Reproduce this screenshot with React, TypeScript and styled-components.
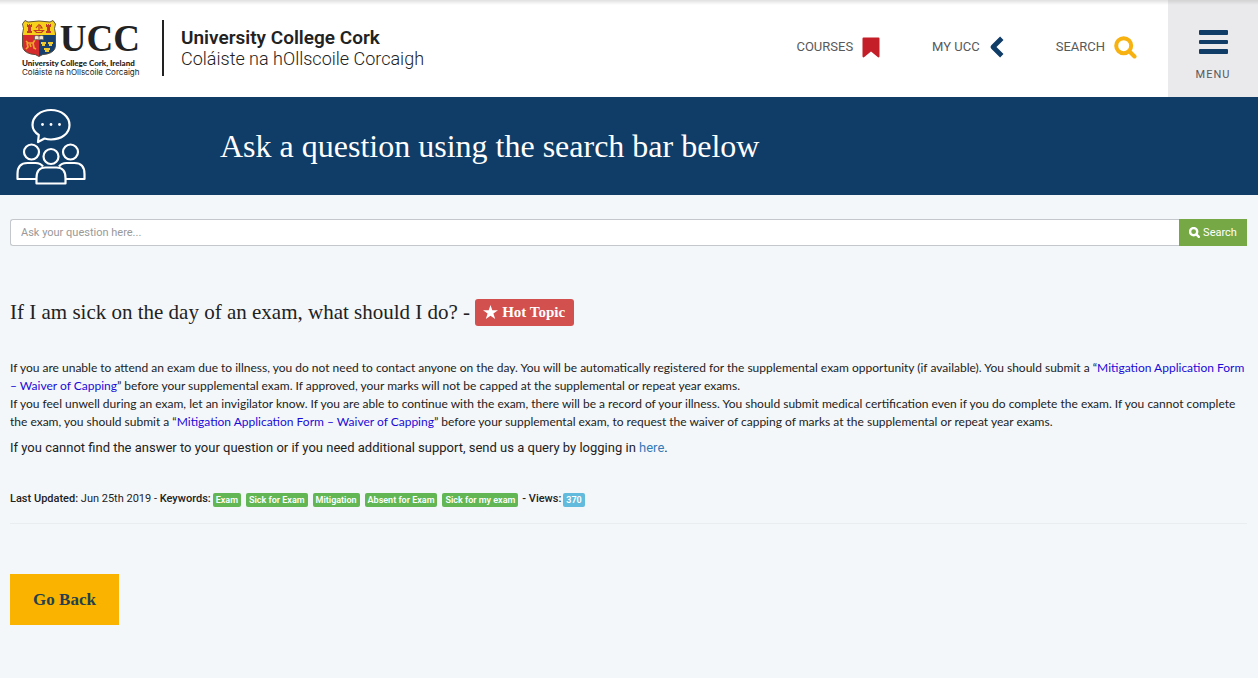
import React from 'react';
import styled, { createGlobalStyle } from 'styled-components';

const navy = '#103c68';
const sans = 'Roboto, "Liberation Sans", sans-serif';
const serif = '"Liberation Serif", serif';

const GlobalStyle = createGlobalStyle`
  * { box-sizing: border-box; }
  body {
    margin: 0;
    background: #f4f7fa;
    color: #222;
    font-family: ${sans};
    font-size: 13px;
  }
`;

const Header = styled.header`
  display: flex;
  align-items: stretch;
  height: 97px;
  background: linear-gradient(rgba(0, 0, 0, 0.12), rgba(0, 0, 0, 0) 5px), #fff;
`;

const Brand = styled.a`
  display: flex;
  align-items: flex-start;
  padding: 20px 0 0 22px;
  color: #222;
  text-decoration: none;
`;

const Logo = styled.span`
  display: flex;
  flex-direction: column;
  width: 118px;
  white-space: nowrap;
`;

const LogoTop = styled.span`
  display: flex;
  align-items: center;
  justify-content: space-between;
  height: 37px;
  margin-bottom: 2px;
`;

const Initials = styled.span`
  font: 700 37px/36px ${serif};
`;

const LogoLine = styled.span<{ $bold?: boolean }>`
  font-family: ${(p) => (p.$bold ? 'Lato' : 'Inter')}, sans-serif;
  font-size: 8px;
  line-height: 9px;
  font-weight: ${(p) => (p.$bold ? 900 : 400)};
`;

const SiteName = styled.span`
  display: flex;
  flex-direction: column;
  justify-content: center;
  height: 56px;
  margin-left: 22px;
  padding-left: 17px;
  border-left: 2px solid #222;
  font-size: 18px;
  line-height: 21px;
`;

const EnglishName = styled.span`
  font-size: 19px;
  font-weight: 600;
`;

const IrishName = styled.span`
  font-weight: 300;
`;

const Nav = styled.nav`
  display: flex;
  align-items: center;
  gap: 52px;
  margin-left: auto;
  padding: 0 31px 3px 0;
`;

const NavLink = styled.a`
  display: flex;
  align-items: center;
  gap: 9px;
  color: #58595b;
  font-size: 13px;
  line-height: 24px;
  text-decoration: none;
`;

const MenuButton = styled.button`
  display: flex;
  flex-direction: column;
  align-items: center;
  gap: 13px;
  width: 90px;
  padding: 30px 0 0;
  border: 0;
  background: linear-gradient(rgba(0, 0, 0, 0.1), rgba(0, 0, 0, 0) 5px), #eaeaec;
  color: #58595b;
  font: 400 11px/13px ${sans};
  letter-spacing: 1px;
`;

const Banner = styled.section`
  display: flex;
  align-items: center;
  height: 98px;
  padding-left: 16px;
  background: ${navy};
  color: #fff;
`;

const BannerTitle = styled.h1`
  margin: 0 0 0 134px;
  font: 400 32px/40px ${serif};
`;

const Main = styled.main`
  padding: 24px 11px 53px 10px;
`;

const SearchForm = styled.form`
  display: flex;
  height: 27px;
`;

const SearchInput = styled.input`
  flex: 1;
  min-width: 0;
  padding: 0 10px;
  border: 1px solid #c4c8cc;
  border-right: 0;
  border-radius: 3px 0 0 3px;
  background: #fff;
  color: #333;
  font: 400 11px/16px ${sans};
  &::placeholder { color: #999; opacity: 1; }
`;

const SearchButton = styled.button`
  display: flex;
  align-items: center;
  justify-content: center;
  gap: 3px;
  width: 68px;
  padding: 0;
  border: 0;
  background: #76a846;
  color: #fff;
  font: 400 11px/16px ${sans};
`;

const Question = styled.h2`
  display: flex;
  align-items: center;
  gap: 5px;
  margin: 53px 0 33px;
  font: 400 21px/27px ${serif};
`;

const HotTopic = styled.span`
  display: flex;
  align-items: center;
  gap: 4px;
  height: 27px;
  padding: 0 9px 0 8px;
  border-radius: 3px;
  background: #d2504d;
  color: #fff;
  font: 700 15px/27px ${serif};
`;

const Answer = styled.p`
  margin: 0;
  font: 400 12px/18px Lato, sans-serif;
  a { color: #1a0ad8; text-decoration: none; }
`;

const Support = styled.p`
  margin: 8px 0 0;
  line-height: 18px;
  a { color: #337ab7; text-decoration: none; }
`;

const Meta = styled.div`
  display: flex;
  align-items: center;
  gap: 2px;
  margin-top: 34px;
  padding-bottom: 16px;
  border-bottom: 1px solid #eaedf0;
  font-size: 11px;
  line-height: 16px;
  strong { font-weight: 500; }
`;

const Tags = styled.ul`
  display: flex;
  gap: 5px;
  margin: 0;
  padding: 0 2px 0 0;
  list-style: none;
`;

const Tag = styled.li<{ $info?: boolean }>`
  display: block;
  margin-top: 2px;
  padding: 0 3px;
  border-radius: 2px;
  background: ${(p) => (p.$info ? '#62bbdc' : '#62b654')};
  color: #fff;
  font-size: 9px;
  font-weight: 600;
  line-height: 14px;
`;

const BackButton = styled.button`
  display: block;
  width: 109px;
  height: 51px;
  margin-top: 50px;
  padding: 0;
  border: 0;
  background: #fab400;
  color: #263f4d;
  font: 700 17px/24px ${serif};
`;

const Crest = () => (
  <svg width="34" height="37" viewBox="0 0 34 37" aria-hidden="true">
    <defs>
      <clipPath id="shield">
        <path d="M3 0.5 L6 2 Q17 0 28 2 L31 0.5 L33.5 4 Q31.500 8 33.500 14 L33.500 26 Q33 32 25 34 Q20 34 17 36.500 Q14 34 9 34 Q1 32 0.500 26 L0.500 14 Q2.500 8 0.500 4Z" />
      </clipPath>
    </defs>
    <g clipPath="url(#shield)">
      <path fill="#f7d01b" d="M0 0h34v15H0z" />
      <path fill="#d62b2c" d="M0 15h17v22H0z" />
      <path fill="#17406f" d="M17 15h17v22H17z" />
      <path fill="#c23b27" d="M5 4h1v1h1V4h1v1h1V4h1v3H9v4h1v2H5v-2h1V7H5zM24 4h1v1h1V4h1v1h1V4h1v3h-1v4h1v2h-5v-2h1V7h-1z" />
      <path fill="none" stroke="#c23b27" strokeWidth="1.200" d="M12.500 10.500h9l-2 2h-5zM17 10V4M14 8l2-2.500M18 5l2 3h-2" />
      <path fill="none" stroke="#f0a52c" strokeWidth="1.700" d="M4 21l2 2h5l2-3M5 23l1 4-2 2M8 24l1 3M11 23l1 5 2 1" />
      <path fill="#efc930" d="M19 22h5v2h-1v2h-3v-2h-1zM26 22h5v2h-1v2h-3v-2h-1zM22 28h6v2h-1v2h-4v-2h-1z" />
      <path fill="#f3e7d0" stroke="#555" strokeWidth="0.700" d="M12.500 16q2-1 4.500 0 2.500-1 4.500 0v4q-2-1-4.500 0-2.500-1-4.500 0zM17 16v4" />
    </g>
    <path fill="none" stroke="#4d4638" strokeWidth="0.900" d="M3 0.500 L6 2 Q17 0 28 2 L31 0.500 L33.500 4 Q31.500 8 33.500 14 L33.500 26 Q33 32 25 34 Q20 34 17 36.500 Q14 34 9 34 Q1 32 0.500 26 L0.500 14 Q2.500 8 0.500 4Z" />
  </svg>
);

const BookmarkIcon = () => (
  <svg width="18" height="21" viewBox="0 0 18 21" aria-hidden="true">
    <path fill="#c41e28" d="M1.500 0.500h15q1 0 1 1v18q-.6 1.500-1.800.5L9 14.500 2.300 20q-1.200 1-1.800-.5v-18q0-1 1-1z" />
  </svg>
);

const ChevronIcon = () => (
  <svg width="15" height="22" viewBox="0 0 15 22" aria-hidden="true">
    <path fill="none" stroke={navy} strokeWidth="4.800" strokeLinejoin="round" d="M12.800 2.200 4 11l8.800 8.800" />
  </svg>
);

type MagnifierProps = { size: number; color: string; weight: number };

const Magnifier = ({ size, color, weight }: MagnifierProps) => (
  <svg width={size} height={size} viewBox="0 0 23 23" aria-hidden="true">
    <circle cx="9.700" cy="9.700" r="7.500" fill="none" stroke={color} strokeWidth={weight} />
    <path d="M15.500 15.500 20.500 20.500" stroke={color} strokeWidth={weight} strokeLinecap="round" />
  </svg>
);

const MenuIcon = () => (
  <svg width="29" height="25" viewBox="0 0 29 25" aria-hidden="true">
    <g fill={navy}>
      <rect width="29" height="5" rx="1" />
      <rect y="10" width="29" height="4" rx="1" />
      <rect y="19" width="29" height="5" rx="1" />
    </g>
  </svg>
);

const PeopleIcon = () => (
  <svg width="70" height="77" viewBox="0 0 70 77" fill="none" stroke="#fff" strokeWidth="2.200" strokeLinejoin="round" aria-hidden="true">
    <path d="M22.800 27C19 24.500 16.500 21 16.500 17 16.500 8.500 24.500 2 35 2s18.500 6.500 18.500 15S45.500 31.500 35 31.500c-2.500 0-4.500-.4-6.500-1L22 34z" />
    <g fill="#fff" stroke="none">
      <circle cx="26.500" cy="16.500" r="1.400" />
      <circle cx="35" cy="16.500" r="1.400" />
      <circle cx="43.500" cy="16.500" r="1.400" />
    </g>
    <circle cx="15.500" cy="44" r="7.500" />
    <circle cx="54.500" cy="44" r="7.500" />
    <circle cx="35" cy="48.500" r="7.500" />
    <path d="M20.500 71H1.500V66q0-11 10-11h8q5 0 7.500 3.500M49.500 71h19V66q0-11-10-11h-8q-5 0-7.500 3.500" />
    <path d="M20.500 75.500V70q0-10.500 9-10.500h11q9 0 9 10.500v5.500z" />
  </svg>
);

const StarIcon = () => (
  <svg width="15" height="18" viewBox="0 0 15 18" aria-hidden="true">
    <path fill="#fff" d="M7.500 1 9.300 6.300H15L10.400 9.600l1.800 5.500-4.700-3.400-4.700 3.400 1.800-5.500L0 6.300h5.700z" />
  </svg>
);

const keywords = ['Exam', 'Sick for Exam', 'Mitigation', 'Absent for Exam', 'Sick for my exam'];

export default function App() {
  return (
    <>
      <GlobalStyle />
      <Header>
        <Brand href="#">
          <Logo>
            <LogoTop>
              <Crest />
              <Initials>UCC</Initials>
            </LogoTop>
            <LogoLine $bold>University College Cork, Ireland</LogoLine>
            <LogoLine>Coláiste na hOllscoile Corcaigh</LogoLine>
          </Logo>
          <SiteName>
            <EnglishName>University College Cork</EnglishName>
            <IrishName>Coláiste na hOllscoile Corcaigh</IrishName>
          </SiteName>
        </Brand>
        <Nav>
          <NavLink href="#">COURSES <BookmarkIcon /></NavLink>
          <NavLink href="#">MY UCC <ChevronIcon /></NavLink>
          <NavLink href="#">SEARCH <Magnifier size={23} color="#f7b211" weight={4} /></NavLink>
        </Nav>
        <MenuButton type="button"><MenuIcon />MENU</MenuButton>
      </Header>
      <Banner>
        <PeopleIcon />
        <BannerTitle>Ask a question using the search bar below</BannerTitle>
      </Banner>
      <Main>
        <SearchForm onSubmit={(e) => e.preventDefault()}>
          <SearchInput type="text" aria-label="Ask your question" placeholder="Ask your question here..." />
          <SearchButton type="submit"><Magnifier size={11} color="#fff" weight={5} />Search</SearchButton>
        </SearchForm>
        <Question>
          If I am sick on the day of an exam, what should I do? -
          <HotTopic><StarIcon />Hot Topic</HotTopic>
        </Question>
        <Answer>
          If you are unable to attend an exam due to illness, you do not need to contact anyone on the day. You will be automatically registered for the supplemental exam opportunity (if available). You should submit a “<a href="#">Mitigation Application Form – Waiver of Capping</a>” before your supplemental exam. If approved, your marks will not be capped at the supplemental or repeat year exams.
        </Answer>
        <Answer>
          If you feel unwell during an exam, let an invigilator know. If you are able to continue with the exam, there will be a record of your illness. You should submit medical certification even if you do complete the exam. If you cannot complete the exam, you should submit a “<a href="#">Mitigation Application Form – Waiver of Capping</a>” before your supplemental exam, to request the waiver of capping of marks at the supplemental or repeat year exams.
        </Answer>
        <Support>
          If you cannot find the answer to your question or if you need additional support, send us a query by logging in <a href="#">here</a>.
        </Support>
        <Meta>
          <span><strong>Last Updated:</strong> Jun 25th 2019 - <strong>Keywords:</strong></span>
          <Tags>
            {keywords.map((word) => <Tag key={word}>{word}</Tag>)}
          </Tags>
          <strong>- Views:</strong>
          <Tag as="span" $info>370</Tag>
        </Meta>
        <BackButton type="button">Go Back</BackButton>
      </Main>
    </>
  );
}
